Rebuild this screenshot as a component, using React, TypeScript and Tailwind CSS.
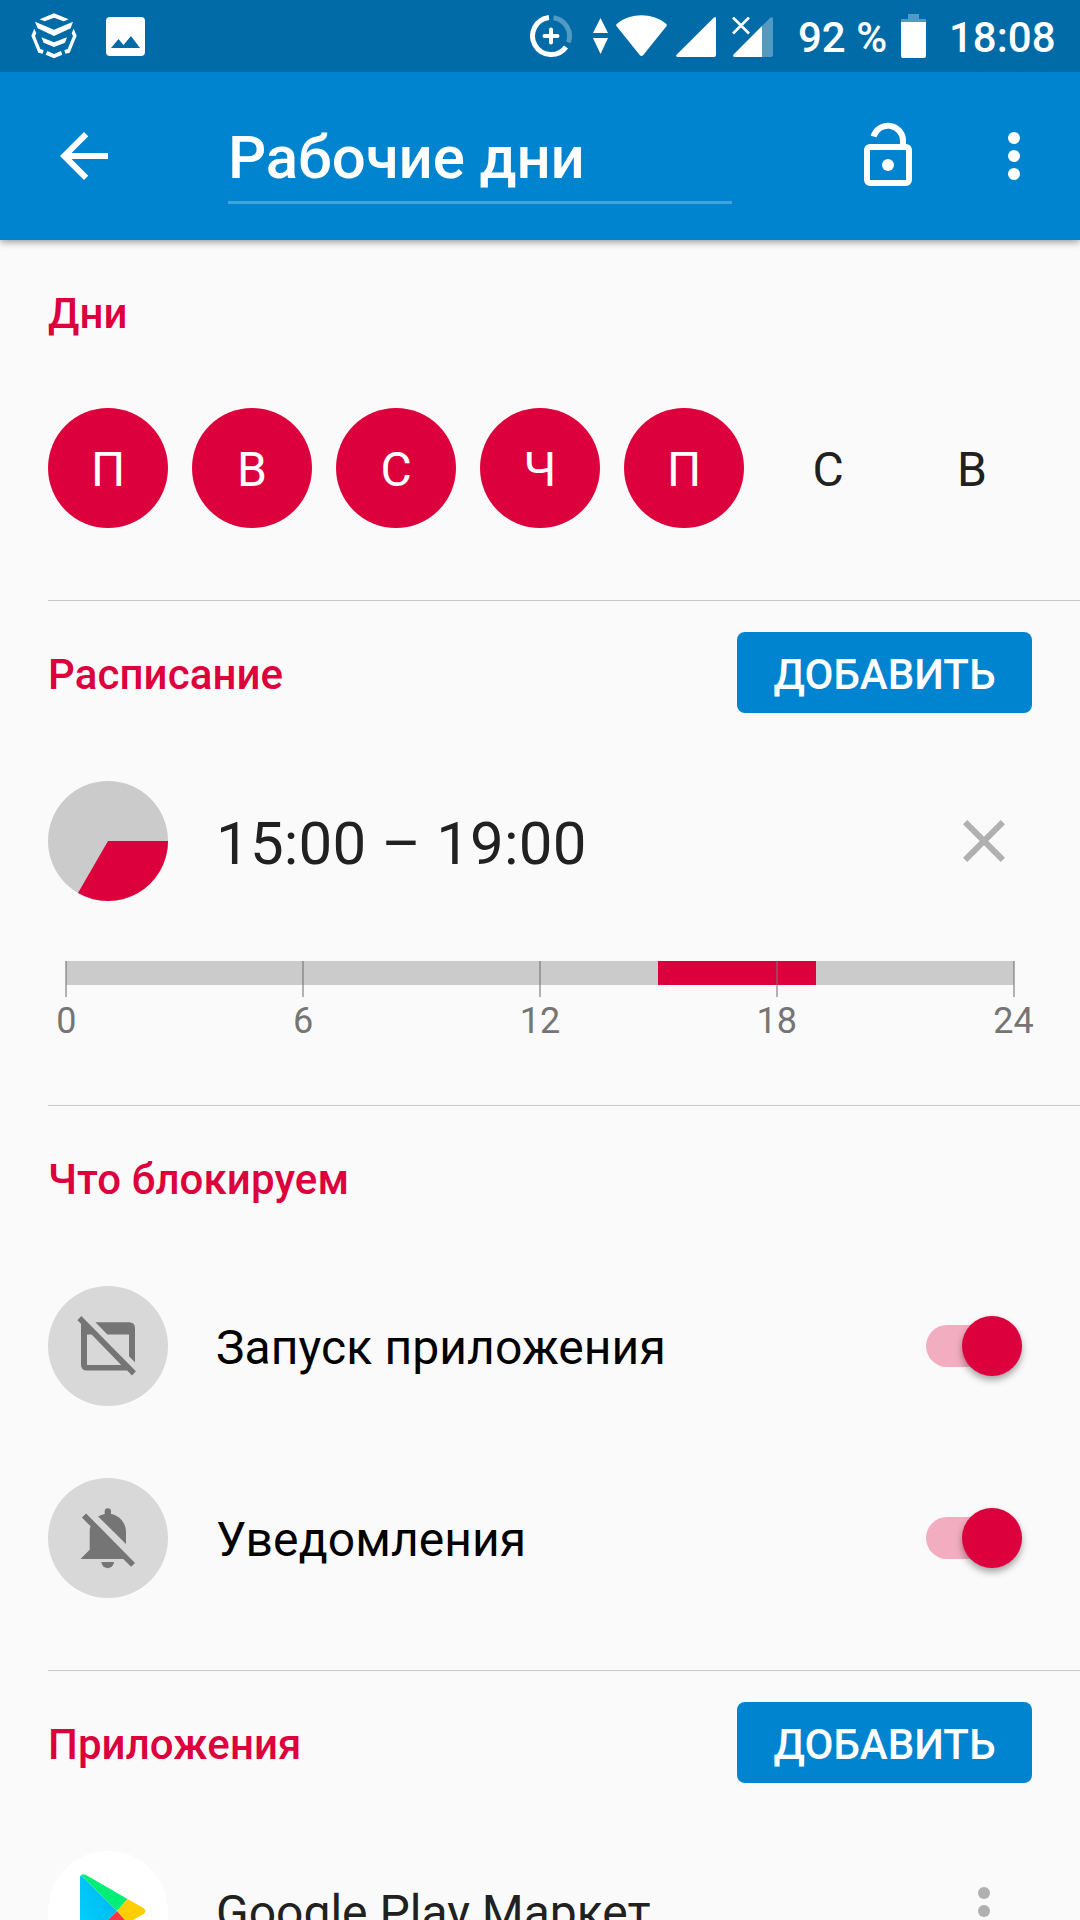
import type { ReactNode } from "react";
import clsx from "clsx";

const days = [
  { label: "П", active: true },
  { label: "В", active: true },
  { label: "С", active: true },
  { label: "Ч", active: true },
  { label: "П", active: true },
  { label: "С", active: false },
  { label: "В", active: false },
];

const hours = [0, 6, 12, 18, 24];

function ShieldIcon() {
  return (
    <svg viewBox="93 40 138 138" className="size-[46px]" fill="currentColor">
      <path d="M119 59 162 41 206 59 191 65 162 54 134 65Z" />
      <path d="M105 66 162 90 219 66 212 86 162 109 113 86Z" />
      <path d="M124 113 162 128 201 113 195 129 162 142 131 129Z" />
      <path d="M103 87 94 108 115 159 128 162 131 152 121 148 105 109 109 101Z" />
      <path d="M221 87 230 108 209 159 196 162 193 152 203 148 219 109 215 101Z" />
      <path d="M142 154 162 163 183 154 187 165 162 176 137 165Z" />
    </svg>
  );
}

function PhotoIcon() {
  return (
    <svg viewBox="0 0 39 39" className="w-[39px] h-[39px]">
      <rect width="39" height="39" rx="4" fill="#fff" />
      <path d="M5 31 12.5 22 17.5 28 25 19 34 31Z" fill="#006ba6" />
    </svg>
  );
}

function DataSaverIcon() {
  return (
    <svg
      viewBox="0 0 44 44"
      className="size-11"
      fill="none"
      stroke="#fff"
      strokeWidth="5"
    >
      <path d="M20 3.6A18.5 18.5 0 1 0 37 32.9" />
      <path d="M24.5 3.7A18.5 18.5 0 0 1 39.4 28.3" opacity=".32" />
      <path d="M22 15.5V28.5M15.5 22H28.5" strokeWidth="4" strokeLinecap="round" />
    </svg>
  );
}

function StatusBar() {
  return (
    <div className="relative z-10 flex h-[72px] items-center bg-[#006ba6] pl-[31px] text-[42px] font-medium text-white">
      <ShieldIcon />
      <div className="ml-[29px]">
        <PhotoIcon />
      </div>
      <div className="ml-auto flex items-center">
        <DataSaverIcon />
        <svg viewBox="0 0 15 36" className="ml-5 h-9 w-[15px]" fill="#fff">
          <path d="M7.5 0 15 15H0ZM0 20H15L7.5 36Z" />
        </svg>
        <svg viewBox="0 0 51 42" className="ml-2 h-[42px] w-[51px]" fill="#fff">
          <path d="M.8 11.5Q-.6 9.8 1.3 8.5C15-2.4 36-2.4 49.7 8.5Q51.6 9.8 50.2 11.5L27.3 40Q25.5 42.2 23.7 40Z" />
        </svg>
        <svg viewBox="0 0 40 40" className="ml-[9px] mt-0.5 size-10" fill="#fff">
          <path d="M38 .5Q40-.8 40 2V38Q40 40 38 40H2Q-1 40 .8 37.5Z" />
        </svg>
        <svg viewBox="0 0 41 40" className="ml-4 mt-0.5 h-10 w-[41px]">
          <path
            d="M30 9 38.5.6Q41-.8 41 2V38Q41 40 39 40H30Z"
            fill="#fff"
            opacity=".32"
          />
          <path d="M30 9V40H3Q0 40 1.8 37.3Z" fill="#fff" />
          <path d="M1 .5 17 16.5M17 .5 1 16.5" stroke="#fff" strokeWidth="2.6" />
        </svg>
        <span className="ml-[25px] w-[103px] whitespace-nowrap pt-[3px] leading-none">
          92 %
        </span>
        <svg viewBox="0 0 25 44" className="h-11 w-[25px]" fill="#fff">
          <path d="M7 0H18V5H25V8H0V5H7Z" opacity=".32" />
          <path d="M0 8H25V42Q25 44 23 44H2Q0 44 0 42Z" />
        </svg>
        <span className="ml-[23px] w-[131px] whitespace-nowrap pt-[3px] leading-none">
          18:08
        </span>
      </div>
    </div>
  );
}

function MoreIcon() {
  return (
    <svg viewBox="0 0 24 24" className="size-[72px]" fill="currentColor">
      <circle cx="12" cy="6" r="2" />
      <circle cx="12" cy="12" r="2" />
      <circle cx="12" cy="18" r="2" />
    </svg>
  );
}

function Toolbar() {
  return (
    <header className="flex h-[168px] items-center bg-[#0084d0] pl-12 pr-[30px] text-white shadow-[0_2px_7px_rgba(0,0,0,0.4)]">
      <svg viewBox="0 0 24 24" className="size-[72px]" fill="currentColor">
        <path d="M20 11H7.83l5.59-5.59L12 4l-8 8 8 8 1.41-1.41L7.83 13H20v-2z" />
      </svg>
      <div className="ml-[108px] mt-[33px] h-[99px] w-[504px] self-start border-b-[3px] border-white/25 pt-5">
        <h1 className="text-[60px] font-medium leading-[66px] tracking-[-0.1px]">
          Рабочие дни
        </h1>
      </div>
      <svg
        viewBox="0 0 24 24"
        className="ml-[120px] size-[72px]"
        fill="none"
        stroke="currentColor"
        strokeWidth="2"
      >
        <rect x="5" y="9" width="14" height="12" rx="1" />
        <path d="M17 9V7A5 5 0 0 0 7.2 5.5" />
        <circle cx="12" cy="15" r="2" fill="currentColor" stroke="none" />
      </svg>
      <div className="ml-[54px]">
        <MoreIcon />
      </div>
    </header>
  );
}

function SectionTitle({ children }: { children: ReactNode }) {
  return (
    <h2 className="text-[42px] font-medium leading-[48px] tracking-[0.1px] text-[#dc003c]">
      {children}
    </h2>
  );
}

function AddButton() {
  return (
    <button className="h-[81px] w-[295px] rounded-lg bg-[#0084d0] pt-[5px] text-[42px] font-medium leading-none text-white">
      ДОБАВИТЬ
    </button>
  );
}

function Divider() {
  return <div className="ml-12 h-px bg-[#c9c9c9]" />;
}

function Timeline() {
  return (
    <div className="ml-[66px] mt-[60px] w-[948px]">
      <div className="relative h-6 bg-[#cbcbcb]">
        <div className="ml-[592px] h-6 w-[158px] bg-[#dc003c]" />
        {hours.map((hour) => (
          <div
            key={hour}
            className="absolute top-0 -ml-px h-9 w-0.5 bg-[#757575]/55"
            style={{ left: `${(hour / 24) * 100}%` }}
          />
        ))}
      </div>
      <div className="-mx-[118px] mt-[17px] flex justify-between text-[36px] leading-[38px] text-[#757575]">
        {hours.map((hour) => (
          <span key={hour} className="w-[237px] text-center">
            {hour}
          </span>
        ))}
      </div>
    </div>
  );
}

function Toggle() {
  return (
    <div className="flex h-[42px] w-[96px] items-center justify-end rounded-full bg-[#f3adc1]">
      <div className="size-[60px] shrink-0 rounded-full bg-[#dc003c] shadow-[0_4px_7px_rgba(0,0,0,0.35)]" />
    </div>
  );
}

function BlockRow({ icon, label }: { icon: ReactNode; label: string }) {
  return (
    <div className="flex h-[192px] items-center pl-12 pr-[58px]">
      <div className="flex size-[120px] items-center justify-center rounded-full bg-[#d8d8d8] text-[#757575]">
        {icon}
      </div>
      <span className="ml-12 flex-1 pt-[3px] text-[48px] leading-none tracking-[0.1px] text-black">
        {label}
      </span>
      <Toggle />
    </div>
  );
}

function WindowOffIcon() {
  return (
    <svg viewBox="0 0 24 24" className="size-[72px]" fill="currentColor">
      <path d="M1.8 3.4 3.1 2 21.3 20.4 20 21.8 18.4 20.2H5Q3 20.2 3 18.2V4.6ZM5 6.6V18.3H16.4Z" />
      <path d="M5 6.4 6.8 8.2H5Z" />
      <path d="M7.8 4.1H19Q21 4.1 21 6.1V17.4L19 15.4V8.2H11.8Z" />
    </svg>
  );
}

function BellOffIcon() {
  return (
    <svg viewBox="0 0 24 24" className="size-[72px]" fill="currentColor">
      <path d="M3.3 5.2 4.7 3.8 21 20.3 19.7 21.6 17.1 19H2.9V18.9L5.9 15.9V10Q5.9 8.7 6.2 8.1Z" />
      <path d="M8.7 4.8Q9.7 4.2 10.9 4V3.1A1.05 1.05 0 0 1 13 3.1V4C15.9 4.5 18 7 18 10V14Z" />
      <path d="M9.8 20H14A2.05 2 0 0 1 9.8 20Z" />
    </svg>
  );
}

function PlayLogo() {
  return (
    <svg viewBox="0 0 120 120" className="size-[120px] shrink-0">
      <defs>
        <linearGradient id="play-blue" x1="1" y1="0" x2="0" y2="1">
          <stop offset="0" stopColor="#00b4ee" />
          <stop offset="1" stopColor="#00d4ff" />
        </linearGradient>
      </defs>
      <circle cx="60" cy="60" r="60" fill="#fff" />
      <path d="M33 24 69 60 33 96Q32 95 32 93V27Q32 25 33 24Z" fill="url(#play-blue)" />
      <path d="M33 24Q35 22.5 38 24L79.5 48 69 60Z" fill="#00ee76" />
      <path d="M79.5 48 95.5 57Q99.5 60 95.5 63L79.5 72 69 60Z" fill="#ffcd00" />
      <path d="M69 60 79.5 72 38 96Q35 97.5 33 96Z" fill="#fb3648" />
    </svg>
  );
}

export default function App() {
  return (
    <div
      className="h-[1920px] w-[1080px] overflow-hidden bg-[#fafafa] text-[#212121]"
      style={{ fontFamily: "Roboto, 'Noto Sans', sans-serif" }}
    >
      <StatusBar />
      <Toolbar />

      <section className="h-[360px] pl-12 pt-[50px]">
        <SectionTitle>Дни</SectionTitle>
        <div className="mt-[70px] flex gap-6">
          {days.map((day, i) => (
            <div
              key={i}
              className={clsx(
                "flex size-[120px] items-center justify-center rounded-full pt-[3px] text-[48px] leading-none",
                day.active && "bg-[#dc003c] text-white",
              )}
            >
              {day.label}
            </div>
          ))}
        </div>
      </section>
      <Divider />

      <section className="h-[504px]">
        <div className="flex h-[143px] items-center justify-between px-12">
          <div className="pt-[5px]">
            <SectionTitle>Расписание</SectionTitle>
          </div>
          <AddButton />
        </div>
        <div className="mt-[37px] flex items-center pl-12 pr-[60px]">
          <svg viewBox="-60 -60 120 120" className="size-[120px]">
            <circle r="60" fill="#cbcbcb" />
            <path d="M0 0H60A60 60 0 0 1 -30 51.96Z" fill="#dc003c" />
          </svg>
          <span className="ml-12 flex-1 pt-[5px] text-[60px] leading-[66px] tracking-[0.2px]">
            15:00 – 19:00
          </span>
          <svg viewBox="0 0 24 24" className="size-[72px]" fill="#b0b0b0">
            <path d="M19 6.41 17.59 5 12 10.59 6.41 5 5 6.41 10.59 12 5 17.59 6.41 19 12 13.41 17.59 19 19 17.59 13.41 12z" />
          </svg>
        </div>
        <Timeline />
      </section>
      <Divider />

      <section className="h-[564px]">
        <div className="flex h-[144px] items-center pl-12 pt-[3px]">
          <SectionTitle>Что блокируем</SectionTitle>
        </div>
        <BlockRow icon={<WindowOffIcon />} label="Запуск приложения" />
        <BlockRow icon={<BellOffIcon />} label="Уведомления" />
      </section>
      <Divider />

      <section>
        <div className="flex h-[143px] items-center justify-between px-12">
          <div className="pt-[5px]">
            <SectionTitle>Приложения</SectionTitle>
          </div>
          <AddButton />
        </div>
        <div className="mt-[37px] flex items-center pl-12 pr-[60px]">
          <PlayLogo />
          <span className="ml-12 flex-1 pt-[3px] text-[48px] leading-[57px]">
            Google Play Маркет
          </span>
          <div className="text-[#b0b0b0]">
            <MoreIcon />
          </div>
        </div>
      </section>
    </div>
  );
}
